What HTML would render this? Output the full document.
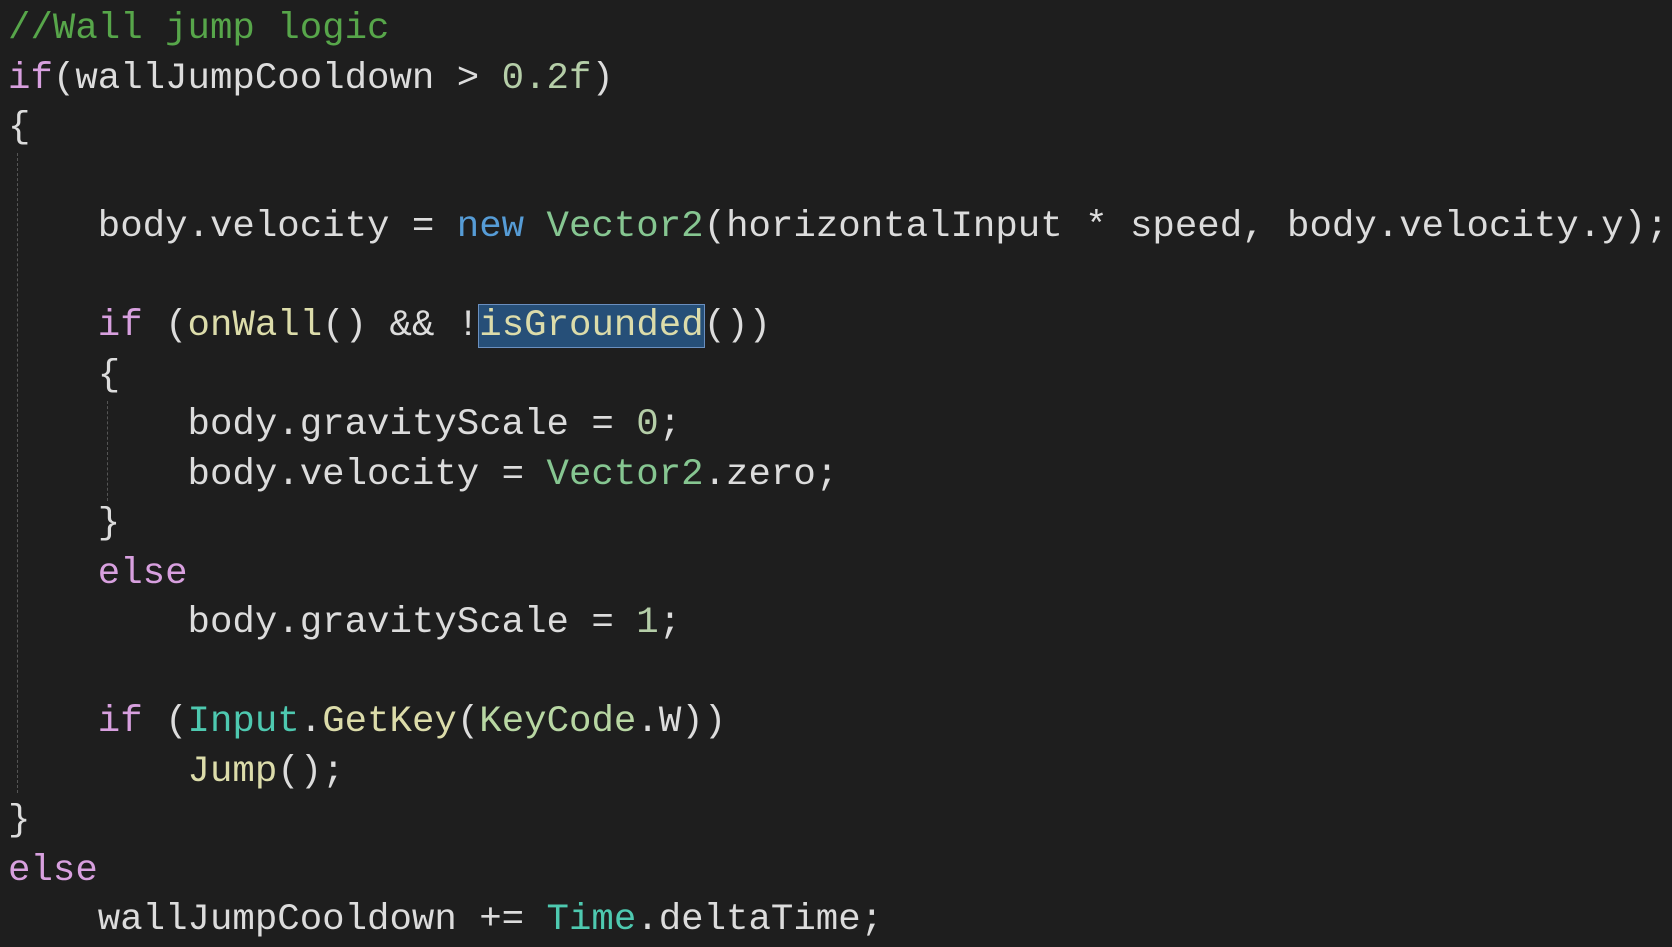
<!DOCTYPE html>
<html><head><meta charset="utf-8"><style>
html,body{margin:0;padding:0;background:#1e1e1e;width:1672px;height:947px;overflow:hidden}
pre{margin:0;position:absolute;left:8px;top:5px;font-family:"Liberation Mono",monospace;font-size:37.4px;line-height:49.5px;color:#dcdcdc}
.c{color:#57a64a}.k{color:#d8a0df}.n{color:#569cd6}.s{color:#86c691}.t{color:#4ec9b0}.m{color:#dcdcaa}.num{color:#b5cea8}.e{color:#b8d7a3}
.sel{background:#264f78;outline:1px solid #6a8fbf}
.g{position:absolute;border-left:1px dashed #555;width:0}
</style></head><body>
<div class="g" style="left:17px;top:153px;height:640px"></div>
<div class="g" style="left:107px;top:401px;height:100px"></div>
<pre><span class="c">//Wall jump logic</span>
<span class="k">if</span>(wallJumpCooldown &gt; <span class="num">0.2f</span>)
{

    body.velocity = <span class="n">new</span> <span class="s">Vector2</span>(horizontalInput * speed, body.velocity.y);

    <span class="k">if</span> (<span class="m">onWall</span>() &amp;&amp; !<span class="m sel">isGrounded</span>())
    {
        body.gravityScale = <span class="num">0</span>;
        body.velocity = <span class="s">Vector2</span>.zero;
    }
    <span class="k">else</span>
        body.gravityScale = <span class="num">1</span>;

    <span class="k">if</span> (<span class="t">Input</span>.<span class="m">GetKey</span>(<span class="e">KeyCode</span>.W))
        <span class="m">Jump</span>();
}
<span class="k">else</span>
    wallJumpCooldown += <span class="t">Time</span>.deltaTime;</pre>
</body></html>
